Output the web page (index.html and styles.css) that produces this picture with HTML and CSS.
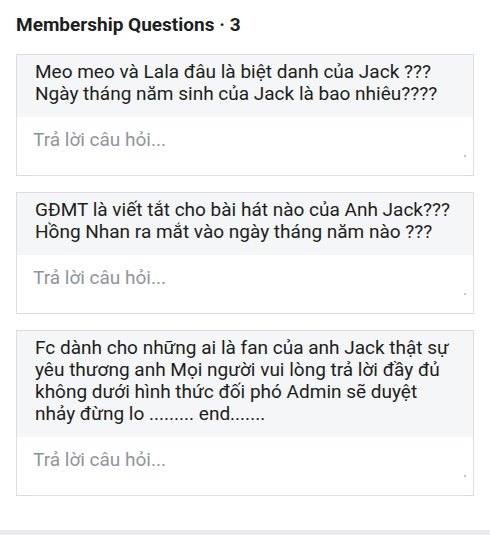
FILE: index.html
```html
<!DOCTYPE html>
<html lang="vi">
<head>
  <meta charset="UTF-8" />
  <meta name="viewport" content="width=device-width, initial-scale=1.0">
  <title>Membership Questions</title>
  <link rel="stylesheet" href="styles.css">
</head>
<body>
  <header>
    <h1>Membership Questions · 3</h1>
  </header>

  <main>
    <div class="card">
      <div class="question">Meo meo và Lala đâu là biệt danh của Jack ???<br>Ngày tháng năm sinh của Jack là bao nhiêu????</div>
      <div class="answer">
        <div class="placeholder">Trả lời câu hỏi...</div>
      </div>
    </div>

    <div class="card">
      <div class="question">GĐMT là viết tắt cho bài hát nào của Anh Jack???<br>Hồng Nhan ra mắt vào ngày tháng năm nào ???</div>
      <div class="answer">
        <div class="placeholder">Trả lời câu hỏi...</div>
      </div>
    </div>

    <div class="card">
      <div class="question">Fc dành cho những ai là fan của anh Jack thật sự yêu thương anh Mọi người vui lòng trả lời đầy đủ không dưới hình thức đối phó Admin sẽ duyệt nhảy đừng lo ......... end.......</div>
      <div class="answer">
        <div class="placeholder">Trả lời câu hỏi...</div>
      </div>
    </div>
  </main>

  <div class="divider"></div>
</body>
</html>
```

FILE: styles.css
```css
body {
  margin: 0;
  font-family: Roboto, "Liberation Sans", sans-serif;
  background-color: #fff;
  color: #1c1e21;
}
header {
  padding: 14px 16px 18px;
}
h1 {
  margin: 0;
  font-size: 19px;
  line-height: 22px;
  font-weight: bold;
  color: #1c1e21;
}
main {
  padding: 0 16px;
}
.card {
  border: 1px solid #dadde1;
  margin-bottom: 16px;
}
.question {
  background-color: #f5f6f7;
  padding: 6px 18px 12px;
  font-size: 19px;
  line-height: 22px;
}
.answer {
  position: relative;
  height: 58px;
  box-sizing: border-box;
  padding: 12px 16px;
  background-color: #fff;
}
.placeholder {
  font-size: 19px;
  line-height: 22px;
  color: #90949c;
}
/* tiny resize grip */
.answer::after {
  content: "";
  position: absolute;
  right: 7px;
  bottom: 18px;
  width: 2px;
  height: 2px;
  background-color: #c4c7cc;
}
.divider {
  margin-top: 34px;
  height: 8px;
  background-color: #e9ebee;
}
```
